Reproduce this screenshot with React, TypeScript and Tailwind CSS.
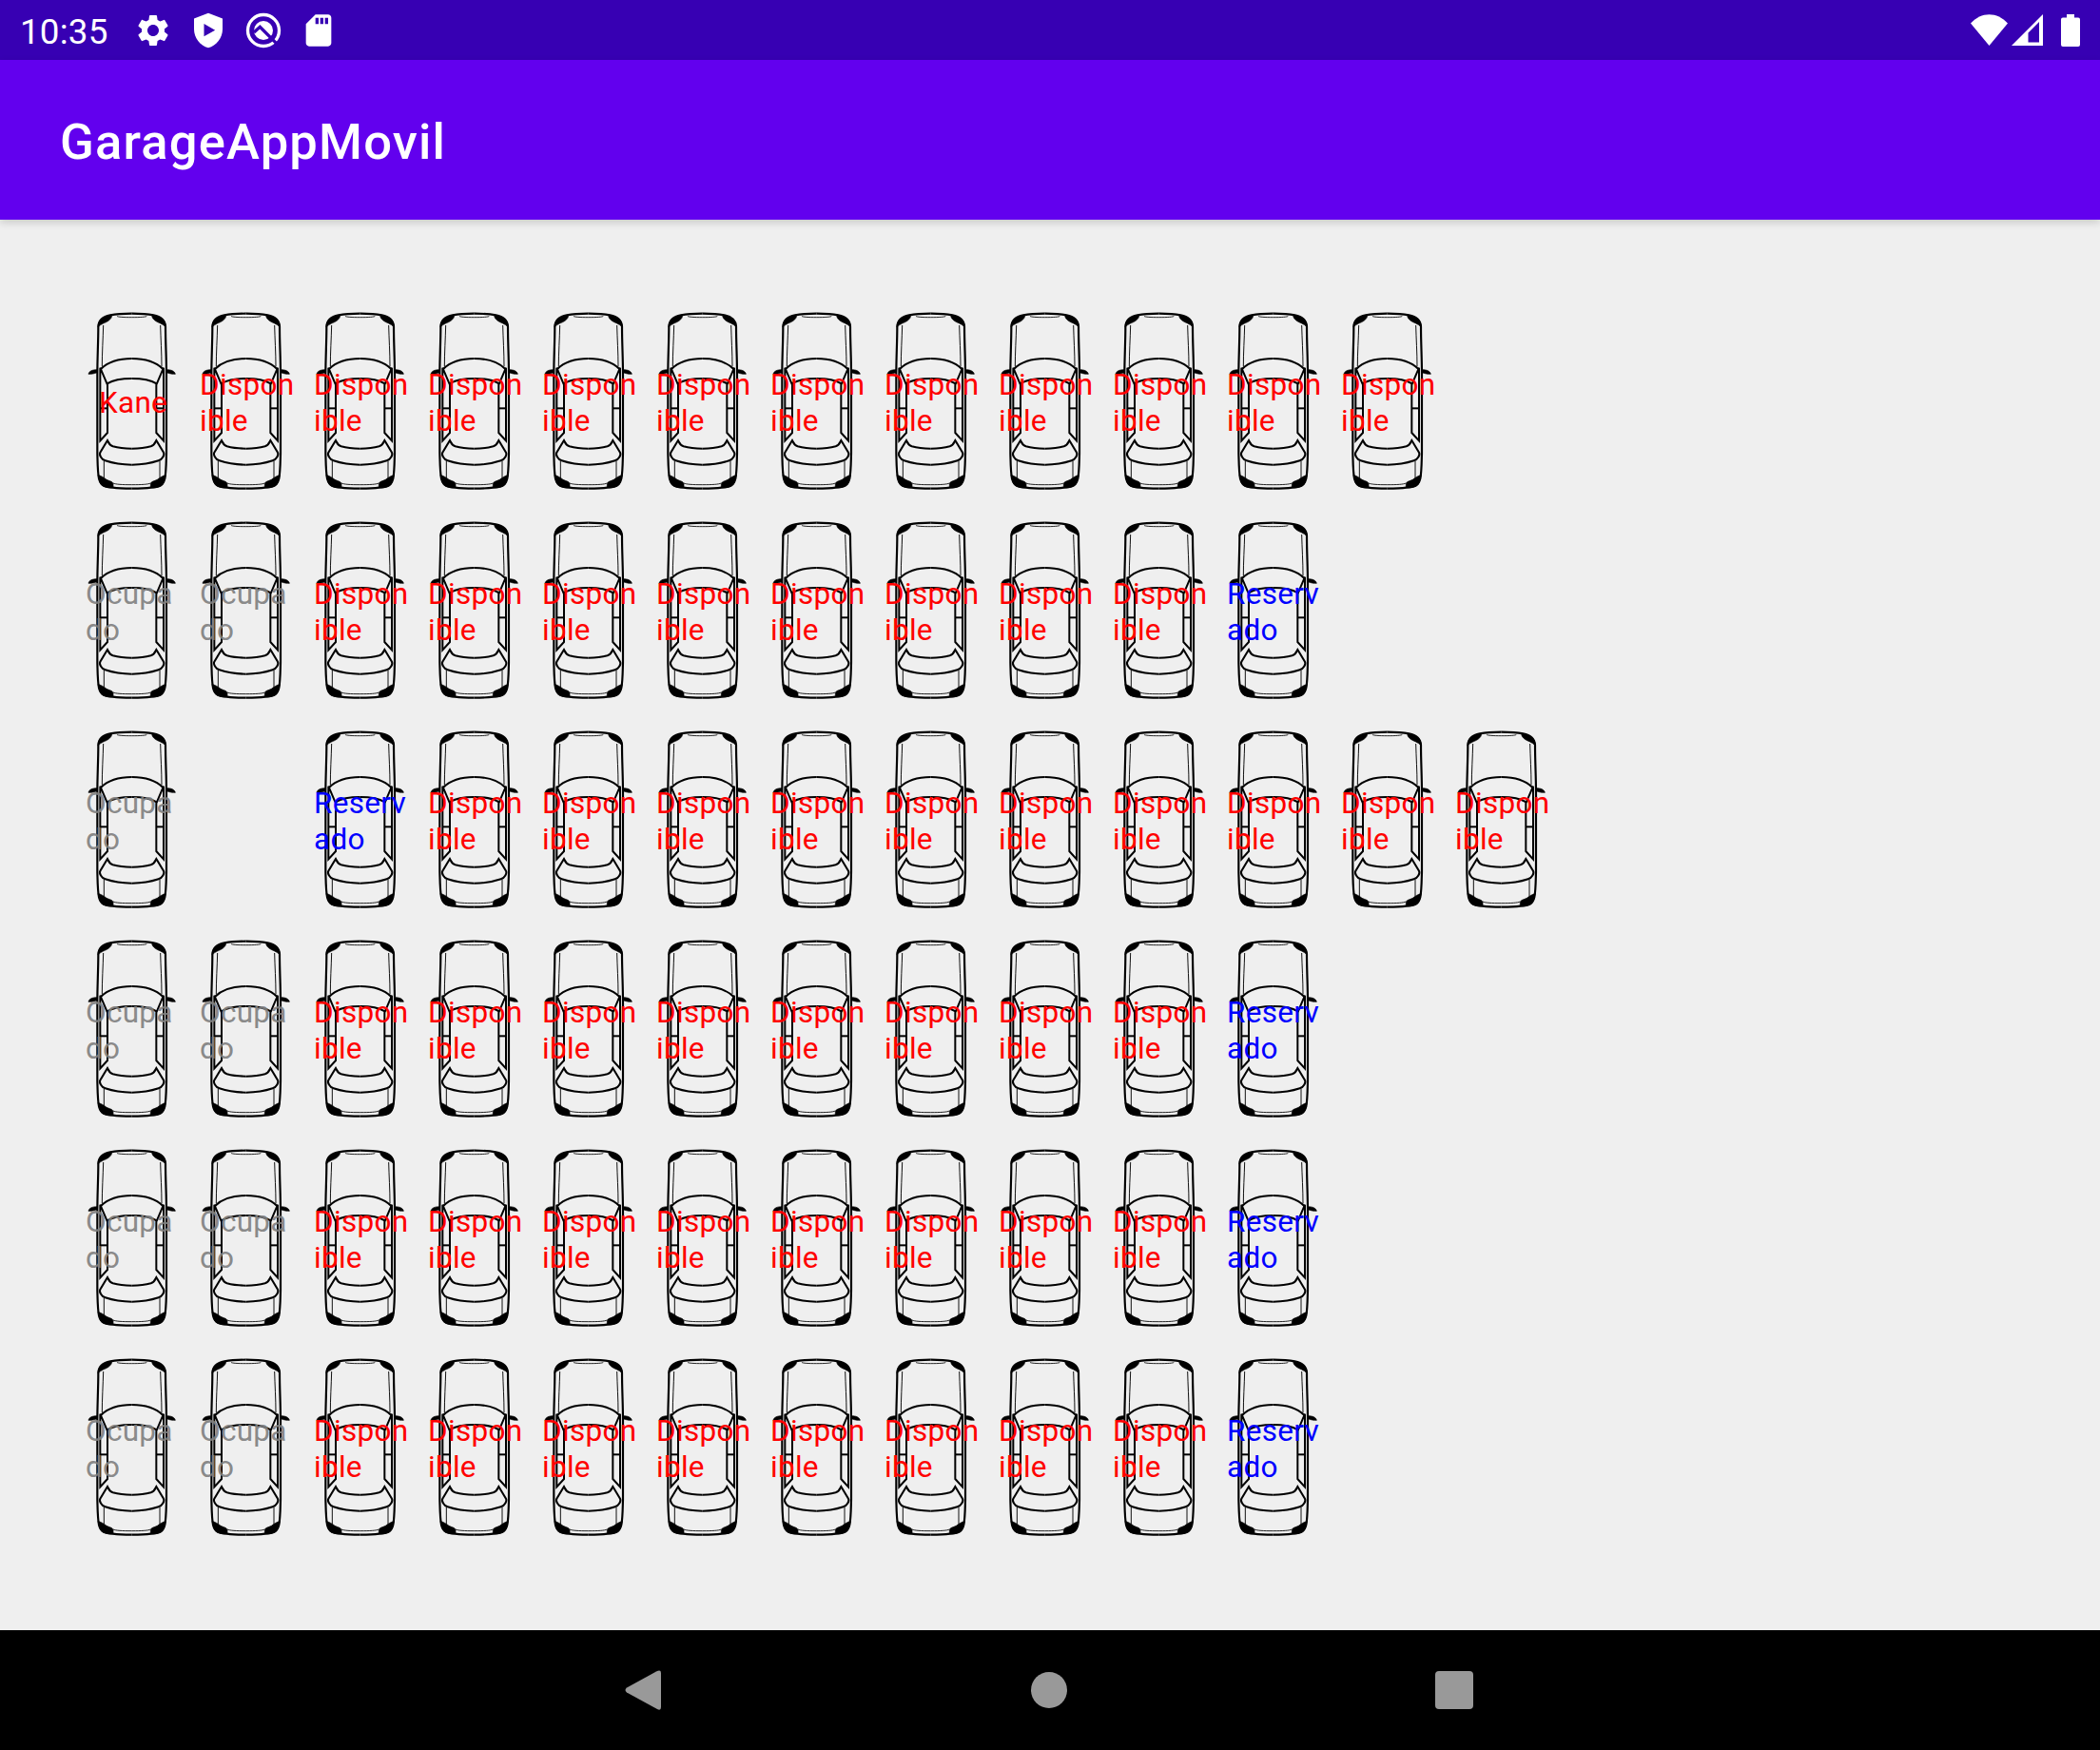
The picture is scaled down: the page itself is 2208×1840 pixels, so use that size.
import React from "react";
import { MdSettings } from "react-icons/md";

type Status = "Disponible" | "Ocupado" | "Reservado" | "Kane" | null;

const D: Status = "Disponible";
const O: Status = "Ocupado";
const R: Status = "Reservado";

const standardRow: Status[] = [O, O, D, D, D, D, D, D, D, D, R];

const rows: Status[][] = [
  ["Kane", D, D, D, D, D, D, D, D, D, D, D],
  standardRow,
  [O, null, R, D, D, D, D, D, D, D, D, D, D],
  standardRow,
  standardRow,
  standardRow,
];

const labels = {
  Kane: { lines: ["Kane"], color: "text-[#ff0000]", width: "" },
  Disponible: { lines: ["Dispon", "ible"], color: "text-[#ff0000]", width: "w-[100px]" },
  Ocupado: { lines: ["Ocupa", "do"], color: "text-[rgba(128,128,128,0.93)]", width: "w-[100px]" },
  Reservado: { lines: ["Reserv", "ado"], color: "text-[#0000ff]", width: "w-[100px]" },
};

/* One half of the car; the other half is its reflection about x = 176. */
function CarHalf() {
  return (
    <>
      <path d="M176 59C150 59 128 60 108 64C84 69 71 82 70 100C70 150 67 200 67 250L67 500C68 535 68 560 72 580C77 602 90 607 116 608C136 611 156 611 176 611" strokeWidth="6.5" />
      <path d="M69 100C71 80 84 68 112 64C114 70 110 76 102 82C92 89 80 90 69 102Z" fill="#000" strokeWidth="2" />
      <path d="M129 67C131 70 150 71 176 71" strokeWidth="2.5" />
      <path d="M86 96C85 140 82 180 82 226" strokeWidth="2.8" />
      <path d="M78 234C100 212 135 201 176 201" strokeWidth="6" />
      <path d="M98 280C118 268 145 264 176 264" strokeWidth="6.5" />
      <path d="M76 230L99 284L99 435L76 460Z" strokeWidth="6" />
      <path d="M76 358L99 358" strokeWidth="6" />
      <path d="M176 485C150 485 130 482 116 478C104 474 103 466 99 459L76 497C72 504 80 520 92 523C118 532 145 536 176 536" strokeWidth="6.2" />
      <path d="M88 524L88 578" strokeWidth="2.8" />
      <path d="M69 568C80 572 88 576 96 583C106 588 115 588 117 596L117 608C94 609 80 605 75 591Z" fill="#000" strokeWidth="2" />
      <path d="M117 594C125 598 145 599 176 599" strokeWidth="2.6" />
      <path d="M39 250C41 240 52 236 67 236L67 245C60 247 55 250 39 250Z" fill="#000" strokeWidth="2" />
    </>
  );
}

function Car() {
  return (
    <svg viewBox="0 0 360 660" className="block h-[220px] w-[120px]" fill="none" stroke="#000" strokeLinejoin="miter">
      <CarHalf />
      <g transform="translate(352 0) scale(-1 1)">
        <CarHalf />
      </g>
    </svg>
  );
}

function Spot({ status }: { status: Status }) {
  if (!status) return <div className="h-[220px] w-[120px]" />;
  const { lines, color, width } = labels[status];
  return (
    <div className="relative h-[220px] w-[120px]">
      <Car />
      <div className="absolute inset-0 flex items-center justify-center pt-[7px]">
        <div className={`${width} ${color} text-[31.5px] leading-[38px] tracking-[0.28px]`}>
          {lines.map((line) => (
            <div key={line} className="whitespace-nowrap">{line}</div>
          ))}
        </div>
      </div>
    </div>
  );
}

function StatusBar() {
  return (
    <div className="flex h-[63px] items-center justify-between bg-[#3700b3] pl-[21px] pr-[21px] text-white">
      <div className="flex h-full items-center">
        <span className="w-[98px] pt-[3px] text-[36.75px] leading-[43px] tracking-[0.2px]">10:35</span>
        <div className="ml-[22px] flex items-center gap-[18px]">
          <MdSettings className="size-[40px]" />
          <svg viewBox="0 0 24 24" className="size-[40px]" fill="currentColor">
            <path fillRule="evenodd" d="M12 1 3 4.5V11.2C3 16.6 6.8 21.4 12 23C17.200 21.400 21 16.600 21 11.200V4.500ZM9.300 7.800 16.300 11.800 9.300 15.800Z" />
          </svg>
          <svg viewBox="0 0 120 120" className="size-[40px]" fill="none" stroke="currentColor">
            <circle cx="60" cy="60" r="49.5" strokeWidth="10" />
            <circle cx="60" cy="60" r="30" fill="currentColor" strokeWidth="0" />
            <path d="M30 66L49 49L107 107" stroke="#3700b3" strokeWidth="10" />
          </svg>
          <svg viewBox="0 0 24 24" className="size-[40px]" fill="currentColor">
            <path fillRule="evenodd" d="M18 2h-8L4 8v12c0 1.100.900 2 2 2h12c1.100 0 2-.900 2-2V4c0-1.100-.900-2-2-2ZM12 8h-2V4h2Zm3 0h-2V4h2Zm3 0h-2V4h2Z" />
          </svg>
        </div>
      </div>
      <div className="flex items-center">
        <svg viewBox="0 0 39 34" className="h-[34px] w-[39px]" fill="currentColor">
          <path d="M0 9.500C11-3 28-3 39 9.500L19.500 33Z" />
        </svg>
        <svg viewBox="0 0 33 34" className="ml-[4px] h-[34px] w-[33px]" fill="currentColor">
          <path fillRule="evenodd" d="M0 33 33 0V33ZM17.500 19.500V29.500H29V8Z" />
        </svg>
        <svg viewBox="0 0 20 34" className="ml-[19px] h-[34px] w-[20px]" fill="currentColor">
          <path d="M6 0h8v3.500h4Q20 3.500 20 5.500V32Q20 34 18 34H2Q0 34 0 32V5.500Q0 3.500 2 3.500H6Z" />
        </svg>
      </div>
    </div>
  );
}

function NavigationBar() {
  return (
    <div className="flex h-[126px] items-center justify-center bg-black pr-[2px]">
      <div className="flex w-[426px] justify-center">
        <svg viewBox="0 0 42 42" className="size-[42px]" fill="#999">
          <path d="M3 18.500 34 1.500Q39 -1 39 3V39Q39 43 35 41L3 23.500Q0 21 3 18.500Z" />
        </svg>
      </div>
      <div className="flex w-[426px] justify-center">
        <div className="size-[38px] rounded-full bg-[#999999]" />
      </div>
      <div className="flex w-[426px] justify-center">
        <div className="size-[40px] rounded-[4px] bg-[#999999]" />
      </div>
    </div>
  );
}

export default function App() {
  return (
    <div className="flex h-[1840px] w-[2208px] flex-col overflow-hidden bg-[#efefef] font-['Roboto',sans-serif]">
      <StatusBar />
      <header className="z-10 flex h-[168px] items-center bg-[#6200ee] pl-[63px] pt-[3px] shadow-[0_3px_8px_rgba(0,0,0,0.16)]">
        <h1 className="text-[52.5px] font-medium leading-[62px] tracking-[1.2px] text-white">GarageAppMovil</h1>
      </header>
      <main className="flex-1 pl-[80px] pt-[79px]">
        {rows.map((row, i) => (
          <div key={i} className="flex">
            {row.map((status, j) => (
              <Spot key={j} status={status} />
            ))}
          </div>
        ))}
      </main>
      <NavigationBar />
    </div>
  );
}
